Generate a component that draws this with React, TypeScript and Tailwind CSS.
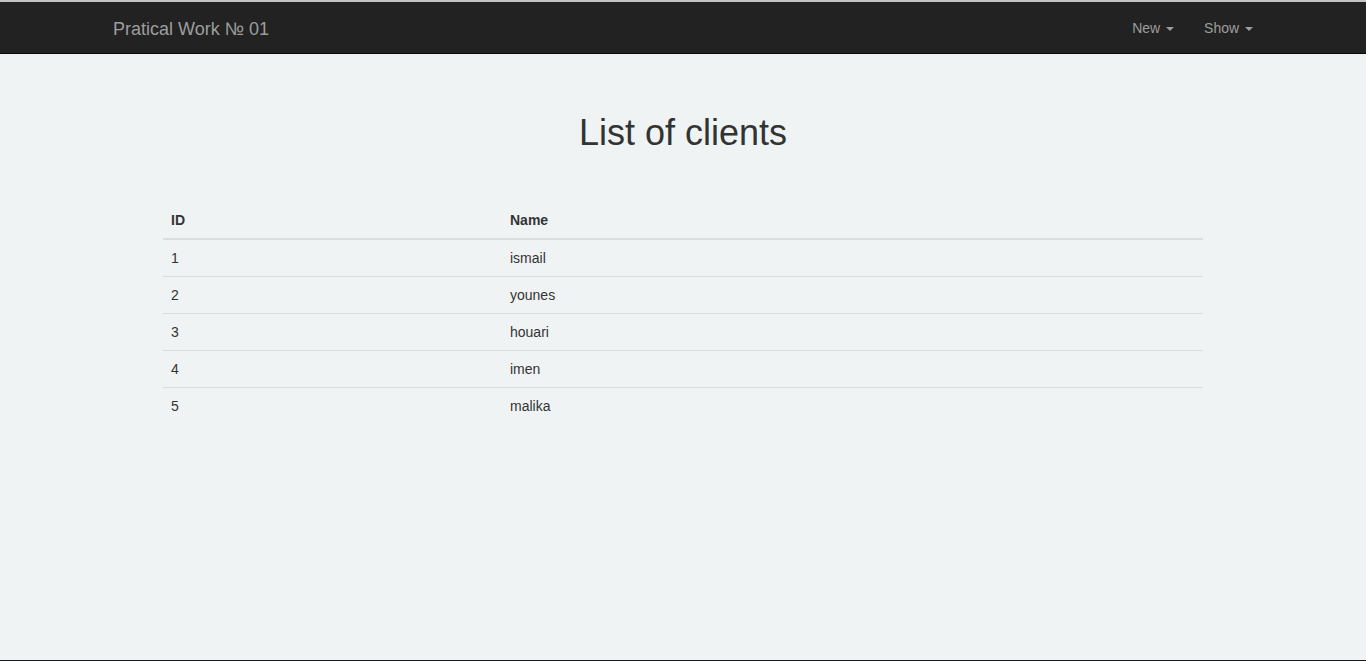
const clients = [
  { id: 1, name: "ismail" },
  { id: 2, name: "younes" },
  { id: 3, name: "houari" },
  { id: 4, name: "imen" },
  { id: 5, name: "malika" },
];

function Caret() {
  return (
    <span className="ml-[2px] inline-block h-0 w-0 align-middle border-t-4 border-x-4 border-t-[#9d9d9d] border-x-transparent" />
  );
}

export default function App() {
  return (
    <div
      className="flex h-[661px] flex-col bg-[#eff3f4] text-[14px] leading-[20px] text-[#333]"
      style={{ fontFamily: '"Liberation Sans", Arial, sans-serif' }}
    >
      <div className="h-[2px] bg-[#c4c4c4]" />
      <nav className="h-[52px] shrink-0 border-b border-[#080808] bg-[#222]">
        <div className="mx-auto flex w-[1170px] px-[15px]">
          <a className="ml-[-15px] h-[51px] px-[15px] pt-[17px] text-[18px] leading-[21px] text-[#9d9d9d]">
            Pratical Work № 01
          </a>
          <ul className="ml-auto mr-[-15px] flex">
            <li className="px-[15px] py-[16px] text-[#9d9d9d]">
              New <Caret />
            </li>
            <li className="px-[15px] py-[16px] text-[#9d9d9d]">
              Show <Caret />
            </li>
          </ul>
        </div>
      </nav>
      <main className="flex-1 pt-[59px]">
        <h1 className="text-center text-[36px] leading-[1.1] font-normal text-[#333]">
          List of clients
        </h1>
        <table className="mx-auto mt-[49px] w-[1040px] border-collapse">
          <thead>
            <tr>
              <th className="w-[339px] border-b-2 border-[#ddd] p-2 text-left font-bold">ID</th>
              <th className="border-b-2 border-[#ddd] p-2 text-left font-bold">Name</th>
            </tr>
          </thead>
          <tbody>
            {clients.map((c, i) => (
              <tr key={c.id}>
                <td className={`p-2 ${i > 0 ? "border-t border-[#ddd]" : ""}`}>{c.id}</td>
                <td className={`p-2 ${i > 0 ? "border-t border-[#ddd]" : ""}`}>{c.name}</td>
              </tr>
            ))}
          </tbody>
        </table>
      </main>
      <div className="h-px bg-[#1a1a1a]" />
    </div>
  );
}
